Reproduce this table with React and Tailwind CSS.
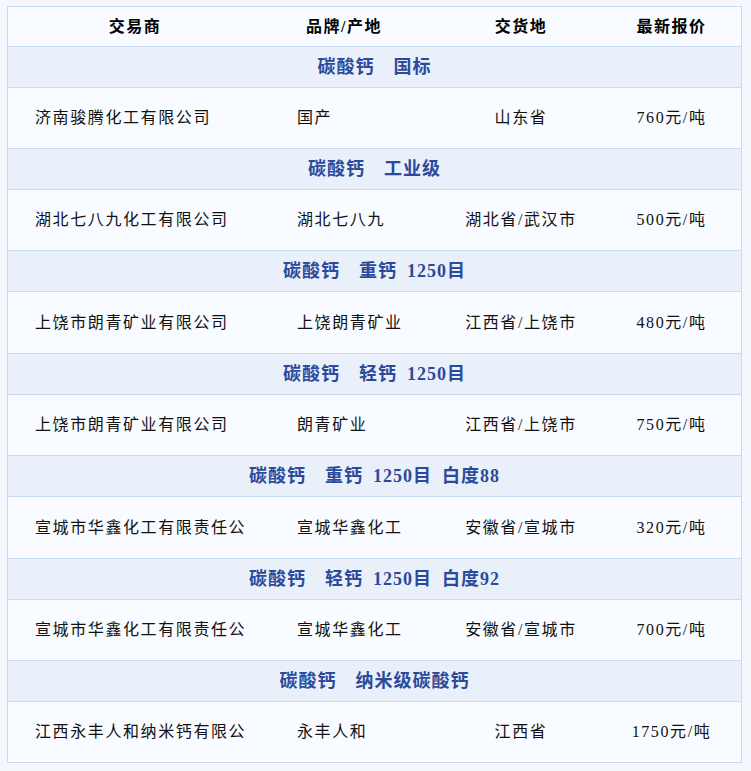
import React from "react";

const groups = [
  {
    title: "碳酸钙　国标",
    row: ["济南骏腾化工有限公司", "国产", "山东省", "760元/吨"],
  },
  {
    title: "碳酸钙　工业级",
    row: ["湖北七八九化工有限公司", "湖北七八九", "湖北省/武汉市", "500元/吨"],
  },
  {
    title: "碳酸钙　重钙\u20021250目",
    row: ["上饶市朗青矿业有限公司", "上饶朗青矿业", "江西省/上饶市", "480元/吨"],
    tall: true,
  },
  {
    title: "碳酸钙　轻钙\u20021250目",
    row: ["上饶市朗青矿业有限公司", "朗青矿业", "江西省/上饶市", "750元/吨"],
  },
  {
    title: "碳酸钙　重钙\u20021250目\u2002白度88",
    row: ["宣城市华鑫化工有限责任公", "宣城华鑫化工", "安徽省/宣城市", "320元/吨"],
    tall: true,
  },
  {
    title: "碳酸钙　轻钙\u20021250目\u2002白度92",
    row: ["宣城市华鑫化工有限责任公", "宣城华鑫化工", "安徽省/宣城市", "700元/吨"],
  },
  {
    title: "碳酸钙　纳米级碳酸钙",
    row: ["江西永丰人和纳米钙有限公", "永丰人和", "江西省", "1750元/吨"],
  },
];

const font = {
  fontFamily: '"Liberation Serif", "Noto Sans CJK SC", serif',
};

const cols = "grid grid-cols-[254px_178px_162px_139px]";

export default function App() {
  return (
    <div className="min-h-[771px] w-[751px] bg-[#f4f8fd] pl-[7px] pt-[6px]" style={font}>
      <div className="w-[735px] border border-[#c8dbf6] bg-[#f8fbff]">
        <div className={`${cols} h-[39px] items-center text-[16px] font-bold tracking-[1.5px] text-black`}>
          <div className="text-center">交易商</div>
          <div className="pl-[44px]">品牌/产地</div>
          <div className="text-center">交货地</div>
          <div className="text-center">最新报价</div>
        </div>
        {groups.map((g, i) => (
          <div key={i}>
            <div className="flex h-[41px] items-center justify-center whitespace-pre border-t border-[#c8dbf6] bg-[#e9f0fa] text-[18px] font-bold tracking-[1px] text-[#2c4a9c]">
              {g.title}
            </div>
            <div
              className={`${cols} items-center border-t border-[#c8dbf6] text-[16px] tracking-[1.6px] text-[#111] ${
                g.tall ? "h-[62px]" : "h-[61px]"
              }`}
            >
              <div className="pl-[27px] whitespace-nowrap">{g.row[0]}</div>
              <div className="pl-[35px] whitespace-nowrap">{g.row[1]}</div>
              <div className="text-center whitespace-nowrap">{g.row[2]}</div>
              <div className="text-center whitespace-nowrap">{g.row[3]}</div>
            </div>
          </div>
        ))}
      </div>
    </div>
  );
}
